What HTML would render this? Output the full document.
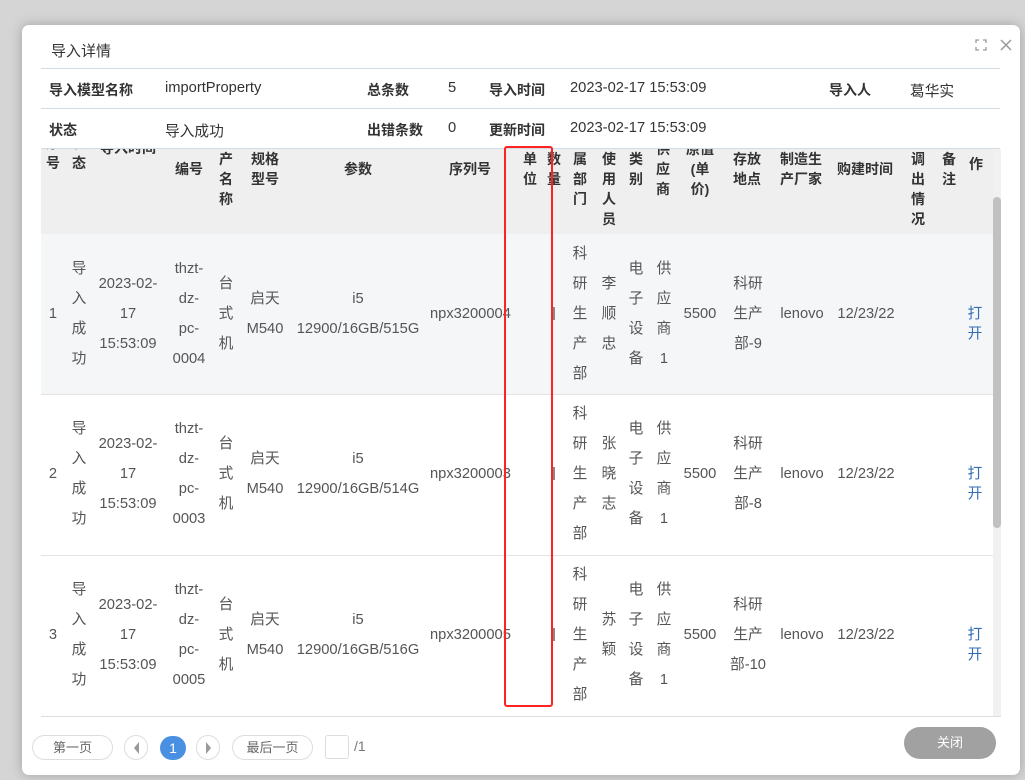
<!DOCTYPE html>
<html><head><meta charset="utf-8"><style>
*{margin:0;padding:0;box-sizing:border-box}
body{width:1025px;height:780px;background:#d5d5d5;font-family:"Liberation Sans","Noto Sans CJK SC",sans-serif;position:relative;overflow:hidden;color:#555;font-size:14.7px}
.modal{position:absolute;left:22px;top:25px;width:998px;height:750px;background:#fff;border-radius:7px;box-shadow:0 0 12px rgba(0,0,0,.25)}
.a{position:absolute;white-space:nowrap}
.c{position:absolute;white-space:nowrap;text-align:center;line-height:30px;transform:translateX(-50%)}
.h{position:absolute;white-space:nowrap;text-align:center;line-height:20px;transform:translateX(-50%);font-weight:bold;color:#333;font-size:14px}
.hl{position:absolute;left:41px;width:959px;height:1px;background:#d3dbe3}
.b{font-weight:bold;color:#333;font-size:14px}
.btn{position:absolute;border:1px solid #ddd;border-radius:13px;height:25px;top:735px;font-size:13px;color:#666;text-align:center;line-height:23px}
</style></head><body>
<div class="modal"></div>
<div class="a" style="left:51px;top:40px;font-size:15px;color:#333">导入详情</div>
<svg class="a" style="left:975px;top:39px" width="12" height="12" viewBox="0 0 12 12" fill="none" stroke="#999" stroke-width="1.3"><path d="M1 4V1h3M8 1h3v3M11 8v3H8M4 11H1V8"/></svg>
<svg class="a" style="left:999px;top:38px" width="14" height="14" viewBox="0 0 14 14" stroke="#999" stroke-width="1.5"><path d="M2 2L12 12M12 2L2 12"/></svg>
<div class="hl" style="top:68px"></div>
<div class="hl" style="top:108px"></div>
<div class="hl" style="top:148px"></div>
<div class="a b" style="left:49px;top:80px">导入模型名称</div>
<div class="a" style="left:165px;top:80px;color:#333">importProperty</div>
<div class="a b" style="left:367px;top:80px">总条数</div>
<div class="a" style="left:448px;top:80px;color:#333">5</div>
<div class="a b" style="left:489px;top:80px">导入时间</div>
<div class="a" style="left:570px;top:80px;color:#333">2023-02-17 15:53:09</div>
<div class="a b" style="left:829px;top:80px">导入人</div>
<div class="a" style="left:910px;top:80px;color:#333">葛华实</div>
<div class="a b" style="left:49px;top:120px">状态</div>
<div class="a" style="left:165px;top:120px;color:#333">导入成功</div>
<div class="a b" style="left:367px;top:120px">出错条数</div>
<div class="a" style="left:448px;top:120px;color:#333">0</div>
<div class="a b" style="left:489px;top:120px">更新时间</div>
<div class="a" style="left:570px;top:120px;color:#333">2023-02-17 15:53:09</div>

<div style="position:absolute;left:41px;top:149px;width:952px;height:567px;overflow:hidden">
<div style="position:absolute;left:-41px;top:-149px;width:1025px;height:780px">
<div class="a" style="left:41px;top:149px;width:952px;height:85px;background:#efefef"></div>
<div class="a" style="left:41px;top:234px;width:952px;height:160px;background:#f5f6f8"></div>
<div class="a" style="left:41px;top:394px;width:952px;height:1px;background:#e3e3e3"></div>
<div class="a" style="left:41px;top:555px;width:952px;height:1px;background:#e3e3e3"></div>
<div class="h" style="left:53px;top:133px">序<br>号</div>
<div class="h" style="left:79px;top:133px">状<br>态</div>
<div class="h" style="left:128px;top:138px">导入时间</div>
<div class="h" style="left:189px;top:159px">编号</div>
<div class="h" style="left:226px;top:129px">资<br>产<br>名<br>称</div>
<div class="h" style="left:265px;top:149px">规格<br>型号</div>
<div class="h" style="left:358px;top:159px">参数</div>
<div class="h" style="left:470px;top:159px">序列号</div>
<div class="h" style="left:530px;top:149px">单<br>位</div>
<div class="h" style="left:554px;top:149px">数<br>量</div>
<div class="h" style="left:580px;top:129px">所<br>属<br>部<br>门</div>
<div class="h" style="left:609px;top:149px">使<br>用<br>人<br>员</div>
<div class="h" style="left:636px;top:149px">类<br>别</div>
<div class="h" style="left:663px;top:139px">供<br>应<br>商</div>
<div class="h" style="left:700px;top:139px">原值<br>(单<br>价)</div>
<div class="h" style="left:747px;top:149px">存放<br>地点</div>
<div class="h" style="left:801px;top:149px">制造生<br>产厂家</div>
<div class="h" style="left:865px;top:159px">购建时间</div>
<div class="h" style="left:918px;top:149px">调<br>出<br>情<br>况</div>
<div class="h" style="left:949px;top:149px">备<br>注</div>
<div class="h" style="left:976px;top:154px">作</div>

<!-- row1 -->
<div class="c" style="left:53px;top:299px">1</div>
<div class="c" style="left:79px;top:254px">导<br>入<br>成<br>功</div>
<div class="c" style="left:128px;top:269px">2023-02-<br>17<br>15:53:09</div>
<div class="c" style="left:189px;top:254px">thzt-<br>dz-<br>pc-<br>0004</div>
<div class="c" style="left:226px;top:269px">台<br>式<br>机</div>
<div class="c" style="left:265px;top:284px">启天<br>M540</div>
<div class="c" style="left:358px;top:284px">i5<br>12900/16GB/515G</div>
<div class="a" style="left:430px;top:299px;line-height:30px">npx3200004</div>
<div class="a" style="left:553px;top:307px;width:2px;height:13px;background:#888"></div>
<div class="c" style="left:580px;top:239px">科<br>研<br>生<br>产<br>部</div>
<div class="c" style="left:609px;top:269px">李<br>顺<br>忠</div>
<div class="c" style="left:636px;top:254px">电<br>子<br>设<br>备</div>
<div class="c" style="left:664px;top:254px">供<br>应<br>商<br>1</div>
<div class="c" style="left:700px;top:299px">5500</div>
<div class="c" style="left:748px;top:269px">科研<br>生产<br>部-9</div>
<div class="c" style="left:802px;top:299px">lenovo</div>
<div class="c" style="left:866px;top:299px">12/23/22</div>
<div class="c" style="left:975px;top:304px;line-height:20px;color:#2f6db5">打<br>开</div>
<!-- row2 -->
<div class="c" style="left:53px;top:459px">2</div>
<div class="c" style="left:79px;top:414px">导<br>入<br>成<br>功</div>
<div class="c" style="left:128px;top:429px">2023-02-<br>17<br>15:53:09</div>
<div class="c" style="left:189px;top:414px">thzt-<br>dz-<br>pc-<br>0003</div>
<div class="c" style="left:226px;top:429px">台<br>式<br>机</div>
<div class="c" style="left:265px;top:444px">启天<br>M540</div>
<div class="c" style="left:358px;top:444px">i5<br>12900/16GB/514G</div>
<div class="a" style="left:430px;top:459px;line-height:30px">npx3200003</div>
<div class="a" style="left:553px;top:467px;width:2px;height:13px;background:#888"></div>
<div class="c" style="left:580px;top:399px">科<br>研<br>生<br>产<br>部</div>
<div class="c" style="left:609px;top:429px">张<br>晓<br>志</div>
<div class="c" style="left:636px;top:414px">电<br>子<br>设<br>备</div>
<div class="c" style="left:664px;top:414px">供<br>应<br>商<br>1</div>
<div class="c" style="left:700px;top:459px">5500</div>
<div class="c" style="left:748px;top:429px">科研<br>生产<br>部-8</div>
<div class="c" style="left:802px;top:459px">lenovo</div>
<div class="c" style="left:866px;top:459px">12/23/22</div>
<div class="c" style="left:975px;top:464px;line-height:20px;color:#2f6db5">打<br>开</div>
<!-- row3 -->
<div class="c" style="left:53px;top:620px">3</div>
<div class="c" style="left:79px;top:575px">导<br>入<br>成<br>功</div>
<div class="c" style="left:128px;top:590px">2023-02-<br>17<br>15:53:09</div>
<div class="c" style="left:189px;top:575px">thzt-<br>dz-<br>pc-<br>0005</div>
<div class="c" style="left:226px;top:590px">台<br>式<br>机</div>
<div class="c" style="left:265px;top:605px">启天<br>M540</div>
<div class="c" style="left:358px;top:605px">i5<br>12900/16GB/516G</div>
<div class="a" style="left:430px;top:620px;line-height:30px">npx3200005</div>
<div class="a" style="left:553px;top:628px;width:2px;height:13px;background:#888"></div>
<div class="c" style="left:580px;top:560px">科<br>研<br>生<br>产<br>部</div>
<div class="c" style="left:609px;top:605px">苏<br>颖</div>
<div class="c" style="left:636px;top:575px">电<br>子<br>设<br>备</div>
<div class="c" style="left:664px;top:575px">供<br>应<br>商<br>1</div>
<div class="c" style="left:700px;top:620px">5500</div>
<div class="c" style="left:748px;top:590px">科研<br>生产<br>部-10</div>
<div class="c" style="left:802px;top:620px">lenovo</div>
<div class="c" style="left:866px;top:620px">12/23/22</div>
<div class="c" style="left:975px;top:625px;line-height:20px;color:#2f6db5">打<br>开</div>
</div></div>
<!-- scrollbar -->
<div class="a" style="left:993px;top:149px;width:8px;height:567px;background:#f1f1f1"></div>
<div class="a" style="left:993px;top:197px;width:8px;height:331px;background:#c1c1c1;border-radius:4px"></div>
<div class="a" style="left:41px;top:716px;width:960px;height:1px;background:#ddd"></div>
<!-- red box -->
<div class="a" style="left:504px;top:146px;width:49px;height:561px;border:2px solid #f22;border-radius:3px"></div>
<!-- footer -->
<div class="btn" style="left:32px;width:81px">第一页</div>
<div class="btn" style="left:124px;width:24px"><span style="display:inline-block;margin-top:6px;width:0;height:0;border-top:6px solid transparent;border-bottom:6px solid transparent;border-right:5px solid #999"></span></div>
<div class="a" style="left:160px;top:736px;width:26px;height:24px;border-radius:12px;background:#4a90e2;color:#fff;text-align:center;line-height:24px;font-size:14px">1</div>
<div class="btn" style="left:196px;width:24px"><span style="display:inline-block;margin-top:6px;width:0;height:0;border-top:6px solid transparent;border-bottom:6px solid transparent;border-left:5px solid #999"></span></div>
<div class="btn" style="left:232px;width:81px">最后一页</div>
<div class="a" style="left:325px;top:735px;width:24px;height:24px;border:1px solid #ddd;border-radius:3px"></div>
<div class="a" style="left:354px;top:738px;color:#777;font-size:14px">/1</div>
<div class="a" style="left:904px;top:727px;width:92px;height:32px;border-radius:16px;background:#a1a1a1;color:#fff;text-align:center;line-height:32px;font-size:13px">关闭</div>
</body></html>
